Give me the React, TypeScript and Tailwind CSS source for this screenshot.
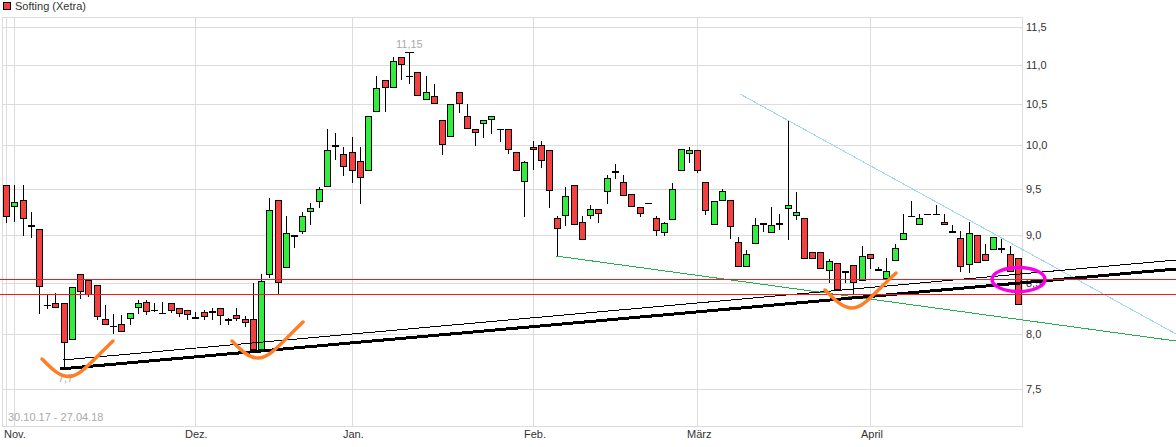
const RED = 'fill-[#f54040]';
const GREEN = 'fill-[#32ee3c]';

// x, wick top, wick bottom, body top, body bottom, colour (d = only a dash)
type Candle = [number, number, number, number, number, 'r' | 'g' | 'd'];

const candles: Candle[] = [
  [6, 185, 223, 185, 217, 'r'],
  [14, 185, 222, 202, 207, 'g'],
  [23, 185, 236, 200, 219, 'r'],
  [31, 212, 238, 225, 227, 'r'],
  [39, 229, 314, 229, 287, 'r'],
  [47, 295, 309, 305, 305, 'd'],
  [55, 293, 308, 303, 308, 'r'],
  [64, 303, 368, 303, 343, 'r'],
  [72, 287, 340, 287, 340, 'g'],
  [80, 274, 299, 274, 292, 'r'],
  [88, 280, 297, 280, 295, 'r'],
  [97, 285, 320, 285, 317, 'r'],
  [105, 305, 325, 319, 325, 'r'],
  [113, 314, 334, 326, 326, 'd'],
  [121, 315, 332, 324, 332, 'r'],
  [130, 313, 325, 313, 319, 'g'],
  [138, 300, 314, 303, 308, 'g'],
  [146, 300, 315, 302, 312, 'r'],
  [154, 303, 312, 310, 310, 'd'],
  [162, 302, 313, 313, 313, 'd'],
  [171, 303, 313, 303, 311, 'r'],
  [179, 308, 317, 308, 314, 'r'],
  [187, 310, 320, 310, 315, 'r'],
  [195, 312, 319, 317, 319, 'g'],
  [204, 310, 320, 312, 317, 'r'],
  [212, 308, 320, 311, 313, 'r'],
  [220, 308, 325, 308, 316, 'r'],
  [228, 318, 325, 319, 321, 'r'],
  [236, 308, 321, 315, 319, 'r'],
  [245, 316, 327, 319, 323, 'r'],
  [253, 283, 350, 319, 350, 'r'],
  [261, 274, 350, 281, 350, 'g'],
  [269, 198, 278, 210, 275, 'g'],
  [278, 200, 295, 200, 283, 'r'],
  [286, 216, 268, 233, 268, 'g'],
  [294, 235, 248, 235, 237, 'r'],
  [302, 212, 234, 216, 232, 'g'],
  [310, 203, 225, 208, 212, 'g'],
  [319, 187, 208, 189, 202, 'g'],
  [327, 129, 187, 150, 187, 'g'],
  [335, 133, 160, 145, 147, 'r'],
  [343, 147, 176, 154, 167, 'r'],
  [352, 137, 183, 152, 171, 'r'],
  [360, 147, 204, 161, 178, 'r'],
  [368, 116, 171, 116, 171, 'g'],
  [376, 76, 112, 88, 112, 'g'],
  [385, 80, 112, 80, 88, 'r'],
  [393, 57, 88, 61, 88, 'g'],
  [401, 57, 80, 57, 65, 'r'],
  [409, 52, 84, 76, 76, 'd'],
  [417, 72, 96, 72, 96, 'r'],
  [426, 76, 100, 92, 100, 'g'],
  [434, 84, 104, 96, 104, 'r'],
  [442, 120, 155, 120, 145, 'r'],
  [450, 104, 137, 104, 137, 'g'],
  [459, 92, 113, 92, 104, 'r'],
  [467, 104, 129, 116, 129, 'r'],
  [475, 129, 146, 129, 133, 'r'],
  [483, 120, 138, 120, 124, 'g'],
  [491, 116, 134, 116, 120, 'g'],
  [500, 129, 142, 129, 129, 'd'],
  [508, 129, 154, 129, 150, 'r'],
  [516, 152, 171, 152, 171, 'r'],
  [524, 161, 217, 162, 182, 'g'],
  [533, 141, 170, 147, 150, 'r'],
  [541, 141, 168, 145, 161, 'r'],
  [549, 150, 208, 150, 191, 'r'],
  [557, 216, 256, 218, 229, 'r'],
  [565, 187, 226, 196, 216, 'g'],
  [574, 185, 225, 185, 225, 'r'],
  [582, 216, 240, 222, 240, 'r'],
  [590, 205, 219, 209, 216, 'g'],
  [598, 209, 223, 209, 214, 'r'],
  [607, 175, 204, 178, 192, 'g'],
  [615, 164, 179, 171, 173, 'g'],
  [623, 175, 196, 182, 196, 'r'],
  [631, 194, 207, 194, 207, 'r'],
  [640, 207, 217, 207, 214, 'r'],
  [648, 203, 203, 203, 203, 'd'],
  [656, 216, 236, 218, 231, 'r'],
  [664, 222, 236, 223, 233, 'g'],
  [672, 183, 220, 189, 220, 'g'],
  [681, 149, 171, 149, 171, 'g'],
  [689, 147, 163, 150, 154, 'g'],
  [697, 150, 173, 150, 171, 'r'],
  [705, 182, 215, 182, 211, 'r'],
  [714, 201, 225, 201, 225, 'g'],
  [722, 189, 201, 191, 201, 'g'],
  [730, 200, 239, 200, 227, 'r'],
  [738, 237, 267, 242, 267, 'r'],
  [746, 250, 267, 254, 267, 'g'],
  [755, 218, 244, 225, 244, 'g'],
  [763, 223, 232, 223, 225, 'r'],
  [771, 207, 233, 225, 233, 'g'],
  [779, 214, 230, 223, 225, 'r'],
  [788, 120, 240, 205, 209, 'g'],
  [796, 192, 220, 212, 216, 'g'],
  [804, 218, 259, 218, 259, 'r'],
  [812, 252, 259, 252, 259, 'r'],
  [820, 252, 269, 252, 269, 'r'],
  [829, 259, 283, 261, 271, 'g'],
  [837, 263, 290, 263, 290, 'r'],
  [845, 271, 283, 271, 273, 'g'],
  [853, 265, 295, 265, 283, 'r'],
  [862, 246, 281, 256, 281, 'g'],
  [870, 254, 269, 254, 259, 'r'],
  [878, 267, 271, 269, 271, 'r'],
  [886, 258, 279, 271, 279, 'g'],
  [895, 244, 261, 248, 261, 'g'],
  [903, 214, 240, 233, 240, 'g'],
  [911, 201, 216, 216, 216, 'd'],
  [919, 214, 225, 218, 225, 'g'],
  [927, 214, 214, 214, 214, 'd'],
  [936, 205, 214, 214, 214, 'd'],
  [944, 214, 225, 222, 225, 'r'],
  [952, 225, 233, 231, 233, 'g'],
  [960, 231, 272, 238, 267, 'r'],
  [969, 222, 273, 233, 265, 'g'],
  [977, 235, 263, 235, 263, 'r'],
  [985, 244, 261, 254, 261, 'r'],
  [993, 237, 250, 237, 250, 'g'],
  [1001, 238, 253, 248, 250, 'g'],
  [1010, 246, 272, 254, 272, 'r'],
  [1018, 258, 305, 258, 305, 'r'],
];

const hGrid = [17, 27, 65, 104, 145, 189, 235, 283, 334, 389, 426];
const vGrid = [2, 6, 14, 195, 352, 533, 697, 870, 1022];

const priceLabels = [
  ['11,5', 31],
  ['11,0', 69],
  ['10,5', 108],
  ['10,0', 149],
  ['9,5', 193],
  ['9,0', 239],
  ['8,5', 287],
  ['8,0', 338],
  ['7,5', 393],
] as const;

const monthLabels = [
  ['Nov.', 4],
  ['Dez.', 185],
  ['Jan.', 343],
  ['Feb.', 524],
  ['März', 687],
  ['April', 861],
] as const;

const smiles = [
  'M42 359 C50 367 58 376 68 376.5 C80 377 92 361 113 341',
  'M232 341 C240 349 248 358 258 358 C270 358 282 342 303 322',
  'M825 290 C833 298 842 308 852 308 C864 308 875 292 896 273',
];

const CandleMark = ({ c }: { c: Candle }) => {
  const [x, wickTop, wickBottom, top, bottom, kind] = c;
  return (
    <g>
      <line x1={x + 0.5} x2={x + 0.5} y1={wickTop} y2={wickBottom} className="stroke-black" />
      {kind === 'd' ? (
        <line x1={x - 3} x2={x + 4} y1={top + 0.5} y2={top + 0.5} className="stroke-black" />
      ) : (
        <rect
          x={x - 2.5}
          y={top + 0.5}
          width={6}
          height={bottom - top - 1}
          className={`stroke-black ${kind === 'r' ? RED : GREEN}`}
        />
      )}
    </g>
  );
};

export default function App() {
  return (
    <div className="w-[1176px] h-[447px] overflow-hidden bg-white font-['Liberation_Sans',Arial,sans-serif] text-[11px] text-[#333]">
      <div className="flex items-center h-[17px] pb-[5px] pl-[3px] gap-[4px]">
        <span className="w-[8px] h-[8px] border border-black bg-[#f54040]" />
        <span className="leading-none">Softing (Xetra)</span>
      </div>
      <svg viewBox="0 17 1176 430" width={1176} height={430} className="block">
        <g shapeRendering="crispEdges">
          {hGrid.map((y) => (
            <line key={y} x1={2} x2={1023} y1={y + 0.5} y2={y + 0.5} className="stroke-[#dcdcdc]" />
          ))}
          {vGrid.map((x) => (
            <line key={x} x1={x + 0.5} x2={x + 0.5} y1={17} y2={427} className="stroke-[#dcdcdc]" />
          ))}
        </g>

        <g className="fill-[#333]">
          {priceLabels.map(([label, y]) => (
            <text key={label} x={1026} y={y}>{label}</text>
          ))}
          {monthLabels.map(([label, x]) => (
            <text key={label} x={x} y={438}>{label}</text>
          ))}
        </g>
        <text x={396} y={48} className="fill-[#aaa]">11,15</text>
        <text x={58} y={382} className="fill-[#aaa]">7,7</text>
        <text x={8} y={421} className="fill-[#aaa]">30.10.17 - 27.04.18</text>

        <g shapeRendering="crispEdges">
          {candles.map((c) => (
            <CandleMark key={c[0]} c={c} />
          ))}
          <line x1={405} x2={414} y1={52.5} y2={52.5} className="stroke-black" />
          <line x1={60} x2={68} y1={368.5} y2={368.5} className="stroke-black" />

          <line x1={556} y1={256} x2={1176} y2={341} className="stroke-[#22b14c]" />
          <line x1={740} y1={94} x2={1176} y2={334} className="stroke-[#99d9ea]" />
          <line x1={63} y1={360} x2={1176} y2={260} className="stroke-black" />
          <line x1={60} y1={369} x2={1176} y2={269} strokeWidth={3} className="stroke-black" />
          <line x1={0} y1={279.5} x2={1176} y2={279.5} className="stroke-[#ed1c24]" />
          <line x1={0} y1={294.5} x2={1176} y2={294.5} className="stroke-[#ed1c24]" />
        </g>

        {smiles.map((d) => (
          <path key={d} d={d} fill="none" strokeWidth={3.5} strokeLinecap="round" className="stroke-[#ff7f27]" />
        ))}
        <ellipse cx={1018.5} cy={279.5} rx={26.5} ry={12} fill="none" strokeWidth={3.5} className="stroke-[#f800e8]" />
      </svg>
    </div>
  );
}
